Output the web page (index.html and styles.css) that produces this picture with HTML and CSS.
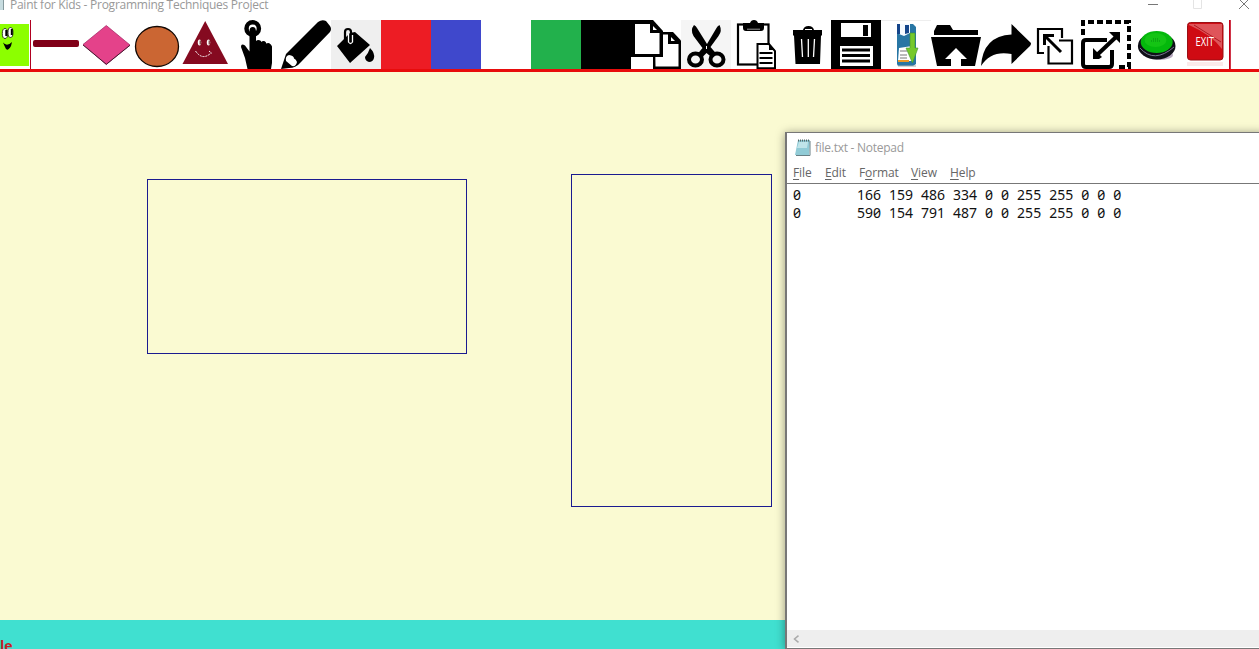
FILE: index.html
```html
<!DOCTYPE html>
<html lang="en">
<head>
<meta charset="utf-8">
<title>Paint for Kids - Programming Techniques Project</title>
<link rel="stylesheet" href="styles.css">
</head>
<body>
<div class="app">
  <header class="titlebar">
    <span class="app-icon"></span>
    <span class="title">Paint for Kids - Programming Techniques Project</span>
    <svg class="controls" width="110" height="14" viewBox="0 0 110 14"><path d="M0 4.500h10" stroke="#777"/><path d="M45.500-2v10.500h8V-2" fill="none" stroke="#e4e4e4"/><path d="M91-1l10 10M101-1l-10 10" stroke="#777"/></svg>
  </header>
  <nav class="toolbar">
    <svg class="tool" viewBox="0 0 50 49"><path fill="#8cff00" d="M0 4h48v42H0z"/><path stroke="#b00020" d="M49.500 0v49"/><g fill="#fff" stroke="#111" stroke-width=".8"><ellipse cx="24" cy="13.500" rx="2.700" ry="5"/><ellipse cx="29.500" cy="12.500" rx="2.500" ry="5"/></g><path d="M25.300 10v6M30.800 9v6" stroke="#000" stroke-width="2"/><path d="M22 22.500q4 4.500 9-.5l-1 4q-4 7-6 1z"/></svg>
    <svg class="tool" viewBox="0 0 50 49"><rect x="2" y="20" width="46" height="7" rx="2" fill="#800018"/></svg>
    <svg class="tool" viewBox="0 0 50 49"><path d="M2 24.500L25.300 5.500 49 25 25.300 44.500z" fill="#e4428a" stroke="#a02060" stroke-width=".7"/><path d="M2 25l23.300 19.300L49 25.300" fill="none" stroke="#4a1830"/></svg>
    <svg class="tool" viewBox="0 0 50 49"><ellipse cx="26" cy="26.500" rx="21.500" ry="20" fill="#cb6633" stroke="#120804" stroke-width="1.300"/></svg>
    <svg class="tool" viewBox="0 0 50 49"><path d="M24.200 1L47 44H1.500z" fill="#850a20"/><g fill="#fff"><ellipse cx="18.500" cy="22.500" rx="1.700" ry="3"/><ellipse cx="27.500" cy="22.500" rx="1.700" ry="3"/></g><path d="M19.200 20.500v4M28.200 20.500v4" stroke="#500"/><path d="M14.500 31q7 10 15.500 2M28 31l3 2.500" fill="none" stroke="#fff" stroke-dasharray="2 1"/></svg>
    <svg class="tool" viewBox="0 0 50 49"><circle cx="21.700" cy="8.500" r="6.200" fill="#fff" stroke="#000" stroke-width="4.500"/><path d="M18.500 11q0-4 3.200-4T25 11v10q2-2 5 0v1q3-2 5 .5v1q4-2 6 3V43l-1 6H16.500L14 38l-4-11q0-4 4-1.500l4.500 6z"/></svg>
    <svg class="tool" viewBox="0 0 50 49"><path d="M37 2q4-3 8-1l4 5q2 3 0 6L20 42q-5 6-12 6l-8 1 5-15z"/><path d="M8 35q-4 1-3 6l6 5q4 1 5-4-1-3-3-3.500 0-3-5-3.500z" fill="#fff"/></svg>
    <svg class="tool" viewBox="0 0 50 49"><path fill="#efefef" d="M0 0h50v49H0z"/><path d="M6 26l13-13 5-1 15 13-20 18zM39 28q5 5 4 10-1 4-5 4-4-1-4-5 3-3 5-9z"/><rect x="14" y="9" width="6" height="15" rx="3" fill="none" stroke="#000" stroke-width="2.200"/><path d="M17.500 14v8q2 3 4 0v-7" fill="none" stroke="#fff" stroke-width="1.300"/></svg>
    <span class="swatch red"></span>
    <span class="swatch blue"></span>
    <span class="swatch white"></span>
    <span class="swatch green"></span>
    <span class="swatch black"></span>
    <svg class="tool" viewBox="0 0 50 49"><path d="M22 12h20l8 8.500V49H22z"/><path d="M24 14.500h13V24h10.500v22.500h-23z" fill="#fff"/><path d="M40 17v4h4z" fill="#fff"/><path d="M0 0h22l10 11v26H0z"/><path d="M4 4h15v9h9.500v21H4z" fill="#fff"/><path d="M22 6v4h4z" fill="#fff"/></svg>
    <svg class="tool" viewBox="0 0 50 49"><path fill="#f5f5f5" d="M0 0h50v49H0z"/><g fill="none" stroke="#000" stroke-width="4"><ellipse cx="14.500" cy="39.500" rx="6.500" ry="6"/><ellipse cx="36" cy="39.500" rx="6.500" ry="6"/></g><path d="M13 5q-4 5-.5 11l9 12-5 6 4 4 5-5 6 5 4-4-6-7 8-11q4-5 1-11-2 1-3 3L26 24 16 8q-1-2-3-3z"/><path d="M25.500 26v3" stroke="#fff"/></svg>
    <svg class="tool" viewBox="0 0 50 49"><rect x="7" y="4.500" width="30.500" height="40" fill="#fff" stroke="#000" stroke-width="2.200"/><path d="M12 3h7q1-3 4-3t4 3h6v5q0 3-3 3H15q-3 0-3-3z"/><path d="M16 9.200h13" stroke="#999"/><path d="M26.500 24H38l6 7v17.300H26.500z" fill="#fff" stroke="#000" stroke-width="2"/><path d="M38 24v6h6z"/><path d="M28.500 33h13M28.500 38h13M28.500 43h13" stroke="#000" stroke-width="2"/></svg>
    <svg class="tool" viewBox="0 0 50 49"><path d="M12 10h10q1-4 5.500-4t5.500 4h8v5.500h-1L39 44H14.500L13 15.500h-1z"/><path d="M24 9.500h7" stroke="#fff"/><path d="M20.500 19l1 18M27.300 19v18M33.500 19l-1 18" stroke="#fff" stroke-width="1.300"/></svg>
    <svg class="tool" viewBox="0 0 50 49"><path d="M0 0h50v49H0z"/><path d="M10 3h30v14H10zM9 26h33v20H9z" fill="#fff"/><path d="M32 5h5v11h-5zM11 28.500h28v3H11zM11 34h28v3H11zM11 39.500h28v3H11z"/></svg>
    <svg class="tool" viewBox="0 0 50 49"><path stroke="#eee" d="M0 .5h50"/><path d="M16 4h16l3 3v37l-3 2H17l-1-2z" fill="#2876a4"/><path d="M18 4h11v9l-6 3-5-2z" fill="#f5faff"/><path d="M24 5h4v8l-4 1zM16 4h3v10h-3z" fill="#15458a"/><path d="M18 28l13-2v15H17z" fill="#fff"/><path d="M19 31h7M19 35h7M19 38h7" stroke="#777"/><path d="M17 41h11" stroke="#e99a28" stroke-width="2"/><path d="M29 13h5v15h3L31.500 43 25 28h4z" fill="#76c92a" stroke="#409330" stroke-width=".6"/><path d="M17 46h18" stroke="#aaa"/></svg>
    <svg class="tool" viewBox="0 0 50 49"><path d="M3 11l3-6h13l3 5h25v5H3zM0 17h50l-6 29H6z"/><path d="M25 28l11 11h-6v7H20v-7h-6z" fill="#fff"/></svg>
    <svg class="tool" viewBox="0 0 50 49"><path d="M0 46Q2 16 30.500 14.500V4L50 23q0 2-1 3L30.500 44V34Q10 30 0 46z"/></svg>
    <svg class="tool" viewBox="0 0 50 49"><path d="M31 18V9H7v24h6" fill="none" stroke="#000" stroke-width="2.200"/><path d="M28 20.500h13v23H17.500V26" fill="none" stroke="#000" stroke-width="2.200"/><path d="M14 16l16 16" stroke="#000" stroke-width="3"/><path d="M12 14h11v3h-8v8h-3z"/></svg>
    <svg class="tool" viewBox="0 0 50 49"><path d="M2 15V2h46v45H35" fill="none" stroke="#000" stroke-width="4" stroke-dasharray="6 3"/><path d="M26 20H5q-3 0-3 3v21q0 3 3 3h23q3 0 3-3V30" fill="none" stroke="#000" stroke-width="4"/><path d="M16 35l19-18" stroke="#000" stroke-width="4"/><path d="M28 12h11v11l-3-3-5-5zM12 28l9 9-3 2h-6z"/></svg>
    <svg class="tool" viewBox="0 0 50 49"><ellipse cx="29" cy="35" rx="13" ry="5" fill="#b7a9bf"/><ellipse cx="25.700" cy="26" rx="18.800" ry="13.500" fill="#101018"/><path d="M9 28q14 16 34-1" fill="none" stroke="#777890"/><ellipse cx="25.700" cy="22" rx="16" ry="11" fill="#04b80c"/><ellipse cx="24.500" cy="20" rx="11" ry="7" fill="#14c414"/><path d="M20 21h10M22 19h6" stroke="#078b10" stroke-dasharray="1 1"/></svg>
    <svg class="tool" viewBox="0 0 50 49"><rect x="6.500" y="2.500" width="35.500" height="37.500" rx="3" fill="#cf0b13" stroke="#9b1015"/><path d="M8 4h33v25Q31 15 8 5z" fill="#df555a"/><path d="M13 5l27 17" stroke="#b01820"/><text class="exit" x="14.500" y="25.500" textLength="18.500" lengthAdjust="spacingAndGlyphs">EXIT</text><path d="M6 42h36v4H6z" fill="#fbeaea"/><path d="M48.900 0v49" stroke="#c3001a" stroke-width="1.800"/></svg>
  </nav>
  <main class="canvas">
    <div class="shape wide"></div>
    <div class="shape tall"></div>
  </main>
  <footer class="status">le</footer>
</div>
<section class="notepad">
  <div class="note-title">
    <svg width="16" height="17" viewBox="0 0 16 17"><path d="M3 1h12l-1 15H0z" fill="#91cbd6"/><path d="M4 3h9l-1 6H2z" fill="#c0e4e9"/><path d="M15 2v14.500H1" fill="none" stroke="#687f84"/><path d="M3 1.500h12" stroke="#566" stroke-width="2" stroke-dasharray="1 1"/></svg>
    <span>file.txt - Notepad</span>
  </div>
  <div class="menu"><span class="m1"><u>F</u>ile</span><span class="m2"><u>E</u>dit</span><span class="m3">F<u>o</u>rmat</span><span class="m4"><u>V</u>iew</span><span class="m5"><u>H</u>elp</span></div>
  <div class="text">
    <div class="row"><span>0</span><span>166 159 486 334 0 0 255 255 0 0 0</span></div>
    <div class="row"><span>0</span><span>590 154 791 487 0 0 255 255 0 0 0</span></div>
  </div>
  <div class="scroll"><svg width="7" height="8" viewBox="0 0 7 8"><path d="M5.500 .7L1.500 4l4 3.300" fill="none" stroke="#aaa" stroke-width="1.500"/></svg></div>
</section>
</body>
</html>
```
FILE: styles.css
```css
* { box-sizing: border-box; }
body { margin: 0; width: 1259px; height: 649px; overflow: hidden; position: relative; font-family: "Open Sans", "Noto Sans", sans-serif; }
.app { display: flex; flex-direction: column; height: 649px; }
.titlebar { height: 20px; display: flex; align-items: flex-start; background: #fff; }
.app-icon { width: 4px; height: 10px; margin-right: 6px; background: #c7dce0; border-right: 1px solid #85999d; }
.title { font-size: 12px; line-height: 16px; margin-top: -3px; color: #999; letter-spacing: -.26px; white-space: nowrap; }
.controls { margin-left: auto; margin-right: 1px; }
.toolbar { height: 52px; display: flex; flex: none; margin-left: -19px; border-bottom: 3px solid #e80c0c; background: #fff; }
.tool, .swatch { width: 50px; height: 49px; flex: none; display: block; }
.red { background: #ed1c24; }
.blue { background: #3f48cc; }
.white { background: #fff; }
.green { background: #22b14c; }
.black { background: #000; }
.exit { font: 12px "Open Sans", sans-serif; fill: #fff; }
.canvas { height: 548px; flex: none; position: relative; background: #fafad2; }
.shape { position: absolute; border: 1px solid #1a1a90; }
.wide { left: 147px; top: 107px; width: 320px; height: 175px; }
.tall { left: 571px; top: 102px; width: 201px; height: 333px; }
.status { height: 29px; flex: none; background: #40e0d0; color: #c51d24; font-weight: bold; font-size: 14px; line-height: 20px; padding-top: 16px; overflow: hidden; }
.notepad { position: absolute; left: 785px; top: 132px; width: 480px; height: 517px; display: flex; flex-direction: column; background: #fff; border: 1px solid #777; border-left-width: 2px; box-shadow: 0 1px 9px rgba(0,0,0,.4); }
.note-title { height: 30px; display: flex; align-items: center; gap: 4px; padding: 0 0 2px 8px; font-size: 12px; color: #999; letter-spacing: -.26px; }
.menu { height: 20px; display: flex; padding-left: 6px; font-size: 12px; line-height: 20px; color: #666; letter-spacing: -.1px; }
.menu u { text-underline-offset: 2px; }
.m1 { width: 32px; }
.m2 { width: 34px; }
.m3 { width: 52px; }
.m4 { width: 39px; }
.text { flex: 1; border-top: 1px solid #777; padding: 2px 0 0 6px; font-family: "Noto Sans", sans-serif; font-size: 14px; font-variant-numeric: slashed-zero; word-spacing: 4.360px; color: #111; }
.row { height: 18px; line-height: 18px; display: flex; white-space: nowrap; }
.row span:first-child { width: 64px; }
.scroll { height: 17px; margin-bottom: 1px; display: flex; align-items: center; padding-left: 6px; background: #eee; }
```
